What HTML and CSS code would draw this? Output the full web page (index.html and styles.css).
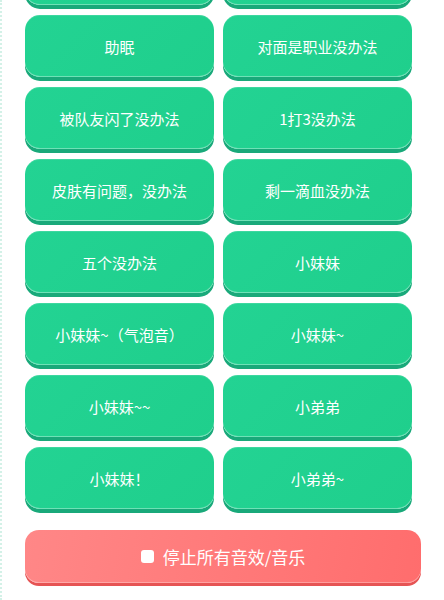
FILE: index.html
```html
<!DOCTYPE html>
<html lang="zh-CN">
<head>
<meta charset="utf-8">
<title>没办法音效板</title>
<link rel="stylesheet" href="styles.css">
</head>
<body>
<div class="page">
  <div class="board">
    <div class="grid">
      <button class="sound" aria-hidden="true"></button>
      <button class="sound" aria-hidden="true"></button>
      <button class="sound">助眠</button>
      <button class="sound">对面是职业没办法</button>
      <button class="sound">被队友闪了没办法</button>
      <button class="sound">1打3没办法</button>
      <button class="sound">皮肤有问题，没办法</button>
      <button class="sound">剩一滴血没办法</button>
      <button class="sound">五个没办法</button>
      <button class="sound">小妹妹</button>
      <button class="sound">小妹妹~（气泡音）</button>
      <button class="sound">小妹妹~</button>
      <button class="sound">小妹妹~~</button>
      <button class="sound">小弟弟</button>
      <button class="sound">小妹妹！</button>
      <button class="sound">小弟弟~</button>
    </div>
    <button class="stop"><span class="stop-icon"></span><span>停止所有音效/音乐</span></button>
  </div>
</div>
</body>
</html>
```
FILE: styles.css
```css
html, body {
  margin: 0;
  padding: 0;
  background: #ffffff;
  overflow: hidden;
  height: 600px;
}
.page {
  height: 600px;
  display: flow-root;
  border-left: 2px dotted #d3f1e7;
  box-sizing: border-box;
  font-family: "Noto Sans CJK SC", "Noto Sans", sans-serif;
}
.board {
  width: 396px;
  margin-left: 23px;
  margin-top: -57px;
}
.grid {
  display: grid;
  grid-template-columns: 189px 189px;
  column-gap: 9px;
  row-gap: 10px;
}
.sound {
  height: 62px;
  border: none;
  border-radius: 15px;
  background: linear-gradient(135deg, #23d393 0%, #1fcf8c 100%);
  box-shadow: 0 4px 0 #19a97a, inset 0 -1px 0 rgba(255,255,255,0.35), inset 0 1px 0 rgba(255,255,255,0.12);
  color: #ffffff;
  font-family: "Noto Sans CJK SC", "Noto Sans", sans-serif;
  font-size: 15px;
  padding: 0 8px;
  cursor: pointer;
}
.stop {
  margin-top: 21px;
  width: 396px;
  height: 53px;
  border: none;
  border-radius: 14px;
  background: linear-gradient(100deg, #ff8787 0%, #ff6d6d 100%);
  box-shadow: 0 3px 0 #e65454, inset 0 -1px 0 rgba(255,255,255,0.3);
  color: #ffffff;
  font-family: "Noto Sans CJK SC", "Noto Sans", sans-serif;
  font-size: 17px;
  display: flex;
  align-items: center;
  justify-content: center;
  gap: 9px;
  padding: 0;
}
.stop-icon {
  width: 13px;
  height: 13px;
  background: #ffffff;
  border-radius: 3px;
}
```
